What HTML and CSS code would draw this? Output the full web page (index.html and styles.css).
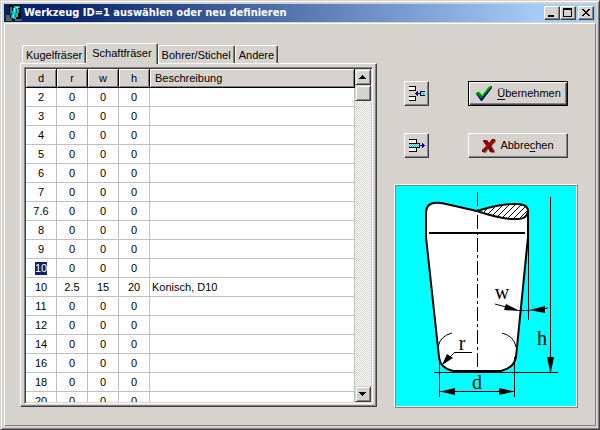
FILE: index.html
```html
<!DOCTYPE html>
<html lang="de">
<head>
<meta charset="utf-8">
<title>Werkzeug ID=1 auswählen oder neu definieren</title>
<link rel="stylesheet" href="styles.css">
</head>
<body>
<div class="window">
  <header class="titlebar">
    <svg class="app-icon" width="16" height="16" viewBox="0 0 16 16" shape-rendering="crispEdges" aria-hidden="true">
      <path d="M3 0h12v16H3z" fill="#000"/>
      <path d="M1 0h2v10H1z" fill="#123"/>
      <path d="M0 10h4v6H0zM4 13h2v3H4zM9 14h7v2H9z" fill="#5a5c60"/>
      <path d="M4 2h2v6H5v2H4z" fill="#008484"/>
      <path d="M8 1h6v2h-2v1h1v4h-1v4h-2v2H7v-1H5v-3h1V6h1V3h1z" fill="#00c6c6"/>
      <path d="M8 3h1v4H8zM10 2h2v1h-2zM7 9h1v3H7z" fill="#6ff"/>
      <path d="M10 4h1v4h-1zM9 9h1v3H9z" fill="#055"/>
    </svg>
    <h1 class="title">Werkzeug ID=1 auswählen oder neu definieren</h1>
    <div class="captions">
      <button class="bevel caption" type="button" aria-label="Minimieren"><svg width="12" height="10" viewBox="0 0 12 10" shape-rendering="crispEdges"><path d="M2 7h6v2H2z"/></svg></button>
      <button class="bevel caption" type="button" aria-label="Maximieren"><svg width="12" height="10" viewBox="0 0 12 10" shape-rendering="crispEdges"><path d="M1 0h9v9H1zM2 2v6h7V2z" fill-rule="evenodd"/></svg></button>
      <button class="bevel caption close" type="button" aria-label="Schließen"><svg width="12" height="10" viewBox="0 0 12 10" shape-rendering="crispEdges"><path d="M2 1h2v1h1v1h2V2h1V1h2v1H9v1H8v1H7v1h1v1h1v1h1v1H8V7H7V6H5v1H4v1H2V7h1V6h1V5h1V4H4V3H3V2H2z"/></svg></button>
    </div>
  </header>

  <main class="client">
    <section class="notebook">
      <div class="tabs" role="tablist">
        <button class="tab" type="button" role="tab">Kugelfräser</button>
        <button class="tab active" type="button" role="tab" aria-selected="true">Schaftfräser</button>
        <button class="tab" type="button" role="tab">Bohrer/Stichel</button>
        <button class="tab" type="button" role="tab">Andere</button>
      </div>
      <div class="page" role="tabpanel">
        <div class="grid">
          <div class="rows">
            <table>
              <thead>
                <tr><th class="num">d</th><th class="num">r</th><th class="num">w</th><th class="num">h</th><th class="desc">Beschreibung</th></tr>
              </thead>
              <tbody>
                <tr><td>2</td><td>0</td><td>0</td><td>0</td><td></td></tr>
                <tr><td>3</td><td>0</td><td>0</td><td>0</td><td></td></tr>
                <tr><td>4</td><td>0</td><td>0</td><td>0</td><td></td></tr>
                <tr><td>5</td><td>0</td><td>0</td><td>0</td><td></td></tr>
                <tr><td>6</td><td>0</td><td>0</td><td>0</td><td></td></tr>
                <tr><td>7</td><td>0</td><td>0</td><td>0</td><td></td></tr>
                <tr><td>7.6</td><td>0</td><td>0</td><td>0</td><td></td></tr>
                <tr><td>8</td><td>0</td><td>0</td><td>0</td><td></td></tr>
                <tr><td>9</td><td>0</td><td>0</td><td>0</td><td></td></tr>
                <tr><td><span class="selected">10</span></td><td>0</td><td>0</td><td>0</td><td></td></tr>
                <tr><td>10</td><td>2.5</td><td>15</td><td>20</td><td>Konisch, D10</td></tr>
                <tr><td>11</td><td>0</td><td>0</td><td>0</td><td></td></tr>
                <tr><td>12</td><td>0</td><td>0</td><td>0</td><td></td></tr>
                <tr><td>14</td><td>0</td><td>0</td><td>0</td><td></td></tr>
                <tr><td>16</td><td>0</td><td>0</td><td>0</td><td></td></tr>
                <tr><td>18</td><td>0</td><td>0</td><td>0</td><td></td></tr>
                <tr><td>20</td><td>0</td><td>0</td><td>0</td><td></td></tr>
              </tbody>
            </table>
          </div>
          <div class="scrollbar">
            <button class="bevel step" type="button" aria-label="Nach oben"><svg width="8" height="4" viewBox="0 0 8 4" shape-rendering="crispEdges"><path d="M3 0h1v1h1v1h1v1h1v1H0V3h1V2h1V1h1z"/></svg></button>
            <div class="bevel step"></div>
            <button class="bevel step last" type="button" aria-label="Nach unten"><svg width="8" height="4" viewBox="0 0 8 4" shape-rendering="crispEdges"><path d="M0 0h7v1H6v1H5v1H4v1H3V3H2V2H1V1H0z"/></svg></button>
          </div>
        </div>
      </div>
    </section>

    <aside class="side">
      <div class="actions">
        <button class="push icon-only" type="button" aria-label="Zeile einfügen">
          <svg width="18" height="17" viewBox="0 0 18 17" shape-rendering="crispEdges">
            <path d="M1 1h7v5H1zM1 11h7v5H1z"/><path d="M1 2h6v3H1zM1 12h6v3H1z" fill="#fff"/>
            <path d="M7 8h1V7h1V6h1v2h2v1h-2v2H9v-1H8V9H7z" fill="#0000b0"/>
            <path d="M12 6h5v1h-4v3h4v1h-5z"/><path d="M13 7h4v3h-4z" fill="#8ff"/><path d="M13 7h1v1h-1zM15 7h1v1h-1zM14 8h1v1h-1zM16 8h1v1h-1zM13 9h1v1h-1zM15 9h1v1h-1z" fill="#00d8e8"/>
          </svg>
        </button>
        <button class="push default" type="button">
          <svg width="18" height="17" viewBox="0 0 18 17">
            <path d="M1 9l4-1 2 3 7-9 3-1v2L7 16H6z" fill="#000080"/>
            <path d="M1 8l3-1 3 4 7-9 3-1v1L6 14z" fill="#008000"/>
            <path d="M1 8l3-1 3 4 7-9h2" fill="none" stroke="#0c0"/>
          </svg>
          <span><u>Ü</u>bernehmen</span>
        </button>
        <button class="push icon-only" type="button" aria-label="Zeile löschen">
          <svg width="18" height="17" viewBox="0 0 18 17" shape-rendering="crispEdges">
            <path d="M1 2h8v4h3v5H9v4H1z"/><path d="M1 3h7v3H1zM1 11h7v3H1z" fill="#fff"/>
            <path d="M1 7h10v3H1z" fill="#a8ffff"/>
            <path d="M1 7h1v1H1zM3 7h1v1H3zM5 7h1v1H5zM7 7h1v1H7zM9 7h1v1H9zM2 8h1v1H2zM4 8h1v1H4zM6 8h1v1H6zM8 8h1v1H8zM10 8h1v1h-1zM1 9h1v1H1zM3 9h1v1H3zM5 9h1v1H5zM7 9h1v1H7zM9 9h1v1H9z" fill="#00cfe8"/>
            <path d="M12 8h2V6h1v1h1v1h1v1h-1v1h-1v1h-1V9h-2z" fill="#0000b0"/>
          </svg>
        </button>
        <button class="push" type="button">
          <svg width="14" height="16" viewBox="0 0 14 16">
            <path d="M2 3h4l2 3 3-4h3v2L10 8l3 5v2H9l-2-4-3 4H1v-2l4-5z" fill="#808080"/>
            <path d="M1 2h4l2 3 3-4h3v2L9 8l3 5v1H8l-2-4-3 4H0v-2l4-4z" fill="#800000"/>
            <path d="M1 3l4 5-4 5M12 2L7 7" fill="none" stroke="#d00"/>
          </svg>
          <span>Abbre<u>c</u>hen</span>
        </button>
      </div>

      <div class="drawing">
        <svg viewBox="396 186 180 220" role="img" aria-label="Schaftfräser mit den Maßen d, r, w und h">
          <defs>
            <pattern id="hatch" width="6" height="6" patternUnits="userSpaceOnUse">
              <path d="M-1 7L7-1M-1 1L1-1M5 7L7 5" stroke="#000" fill="none"/>
            </pattern>
          </defs>
          <path d="M426 236V212Q427 204 436 203Q444 202 477 211Q505 203 518 204Q528 205 528 213V236L516 357Q514 371 500 372H454Q441 370 439 357Z" fill="#fff"/>
          <path d="M477 211Q500 204 512 204Q528 203 528 211Q527 219 518 219Q503 220 477 211Z" fill="url(#hatch)" stroke="#000" stroke-width="2"/>
          <path d="M477 211L446 204Q426 199 426 213V237L439 357Q440 368 453 371H501Q514 368 516 357L528 237V211" fill="none" stroke="#000" stroke-width="2"/>
          <path d="M429 233H525" stroke="#000" stroke-width="2"/>
          <path d="M477.500 192V375" stroke="#000" stroke-dasharray="14 3 3 3"/>
          <path d="M528.500 211V320M550.500 197V371M434 372.500H558M439.500 357V397M514.500 357V397M440 391.500H514M519 310.500H530M495 304L506 307M543 309L548 308M455 352.500H472M455 352L450 357" stroke="#000" fill="none"/>
          <path d="M452 333Q440 336 438 347M502 333Q514 336 516 347" stroke="#000" fill="none"/>
          <path d="M440 391.500L455 388V395ZM514 391.500L499 388V395ZM547 357H554L551 372H550ZM520 311L504 310L506 304ZM529 310L545 306V313ZM442 365L447 354L453 358Z"/>
          <g class="dims" text-anchor="middle">
            <text x="502" y="299">w</text>
            <text x="542" y="345">h</text>
            <text x="462" y="350">r</text>
            <text x="477" y="389">d</text>
          </g>
        </svg>
      </div>
    </aside>
  </main>
</div>
</body>
</html>
```

FILE: styles.css
```css
:root {
  --face: #d6d3ce;
  --shadow: #848284;
  --dark: #424142;
  --line: #c0c0c0;
}

* {
  box-sizing: border-box;
}

body {
  margin: 0;
  font: 11px/13px "Liberation Sans", Arial, sans-serif;
  color: #000;
  background: var(--face);
}

button {
  margin: 0;
  padding: 0;
  font: inherit;
  color: inherit;
  background: var(--face);
}

svg {
  display: block;
  flex: none;
}

.window {
  display: flex;
  flex-direction: column;
  height: 100vh;
  padding: 2px;
  border: 1px solid;
  border-color: var(--face) var(--dark) var(--dark) var(--face);
  box-shadow: inset 1px 1px #fff, inset -1px -1px var(--shadow);
}

.titlebar {
  display: flex;
  align-items: center;
  height: 18px;
  margin: 1px 1px 1px;
  padding: 0 2px;
  background: linear-gradient(to right, #08246b 10%, #a5cbf7 90%);
}

.title {
  flex: 1;
  margin: 0 0 0 2px;
  font: bold 11px/16px "DejaVu Sans Condensed", "DejaVu Sans", sans-serif;
  color: #fff;
  white-space: nowrap;
}

.captions {
  display: flex;
}

.bevel {
  display: flex;
  align-items: center;
  justify-content: center;
  border: 1px solid;
  border-color: #fff var(--dark) var(--dark) #fff;
  box-shadow: inset -1px -1px var(--shadow);
  background: var(--face);
}

.caption {
  width: 16px;
  height: 14px;
}

.close {
  margin-left: 2px;
}

.client {
  flex: 1;
  min-height: 0;
  display: flex;
  gap: 17px;
  margin: 0 1px 1px;
  padding: 19px 17px 18px 15px;
  border: 1px solid;
  border-color: #fff var(--shadow) var(--shadow) #fff;
}

.notebook {
  flex: 1;
  min-width: 0;
  display: flex;
  flex-direction: column;
}

.tabs {
  display: flex;
  align-items: flex-end;
  height: 20px;
  padding-left: 2px;
}

.tab {
  height: 18px;
  padding: 1px 3px 0;
  border: 1px solid;
  border-color: #fff var(--dark) transparent #fff;
  border-bottom: 0;
  border-radius: 2px 2px 0 0;
  box-shadow: inset -1px 0 var(--shadow);
  white-space: nowrap;
}

.tab.active {
  position: relative;
  height: 21px;
  margin-bottom: -1px;
  padding: 0 5px 2px;
}

.page {
  flex: 1;
  min-height: 0;
  display: flex;
  padding: 3px 2px 1px 3px;
  border: 1px solid;
  border-color: #fff var(--dark) var(--dark) #fff;
  box-shadow: inset -1px -1px var(--shadow);
}

.grid {
  flex: 1;
  display: flex;
  min-width: 0;
  margin: 0 1px 1px 0;
  padding: 1px;
  border: 1px solid;
  border-color: var(--shadow) #fff #fff var(--shadow);
  box-shadow: inset 1px 1px var(--dark), inset -1px -1px var(--face);
}

.rows {
  flex: 1;
  overflow: hidden;
  background: #fff;
}

table {
  width: 100%;
  table-layout: fixed;
  border-collapse: separate;
  border-spacing: 0;
}

th,
td {
  height: 19px;
  padding: 0;
  text-align: center;
  font-weight: normal;
}

th {
  border-right: 1px solid #000;
  border-bottom: 1px solid #000;
  background: var(--face);
  box-shadow: inset 1px 1px #fff, inset -1px -1px var(--shadow);
}

.num {
  width: 31px;
}

th.desc {
  padding-left: 5px;
  text-align: left;
}

td {
  border-right: 1px solid var(--line);
  border-bottom: 1px solid var(--line);
}

td:last-child {
  padding-left: 2px;
  text-align: left;
}

.selected {
  display: inline-block;
  color: #fff;
  background: #08246b;
}

.scrollbar {
  display: flex;
  flex-direction: column;
  width: 16px;
  background: repeating-conic-gradient(#fff 0 25%, var(--face) 0 50%) 0 0 / 2px 2px;
}

.step {
  height: 16px;
  border-color: var(--face) var(--dark) var(--dark) var(--face);
  box-shadow: inset 1px 1px #fff, inset -1px -1px var(--shadow);
}

.last {
  margin-top: auto;
}

.side {
  width: 184px;
  display: flex;
  flex-direction: column;
  gap: 26px;
  padding-top: 38px;
}

.actions {
  display: grid;
  grid-template-columns: 25px 100px;
  justify-content: space-between;
  row-gap: 27px;
  padding: 0 10px;
}

.push {
  display: flex;
  align-items: center;
  justify-content: center;
  gap: 4px;
  height: 25px;
  border: 1px solid;
  border-color: #fff var(--dark) var(--dark) #fff;
  box-shadow: inset -1px -1px var(--shadow);
}

.default {
  border-color: #000;
  box-shadow: inset 1px 1px #fff, inset -1px -1px var(--dark), inset -2px -2px var(--shadow);
}

u {
  text-underline-offset: 2px;
}

.drawing {
  padding: 1px;
  border: 1px solid;
  border-color: #fff var(--shadow) var(--shadow) #fff;
  box-shadow: inset 1px 1px var(--shadow), inset -1px -1px #fff;
}

.drawing svg {
  width: 100%;
  background: #0ff;
}

.dims {
  font: 20px "Liberation Serif", "Times New Roman", serif;
}
```
